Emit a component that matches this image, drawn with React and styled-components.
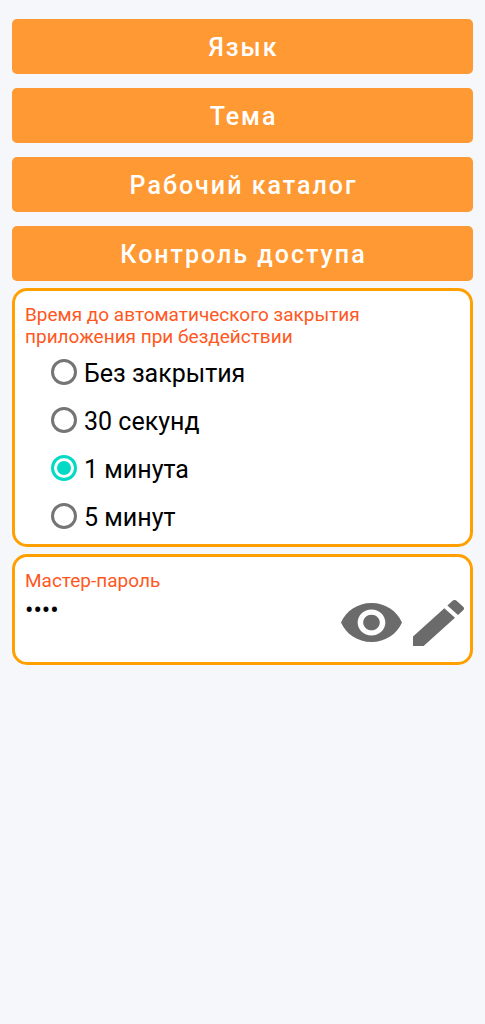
import React, { useState } from "react";
import styled, { createGlobalStyle } from "styled-components";

const GlobalStyle = createGlobalStyle`
  *, *::before, *::after { box-sizing: border-box; }
  body {
    margin: 0;
    background: #f5f7fb;
    font-family: Roboto, "Noto Sans", sans-serif;
    color: #000;
  }
`;

const Page = styled.main`
  display: flex;
  flex-direction: column;
  gap: 7px;
  padding: 19px 12px;
`;

const Menu = styled.nav`
  display: flex;
  flex-direction: column;
  gap: 14px;
`;

const MenuButton = styled.button`
  height: 55px;
  padding: 3px 0 0 2px;
  border: 0;
  border-radius: 5px;
  background: #ff9933;
  color: #fff;
  font: 500 25px/30px Roboto, "Noto Sans", sans-serif;
  letter-spacing: 2px;
  cursor: pointer;
`;

const Card = styled.section`
  border: 3px solid #ffa000;
  border-radius: 15px;
  background: #fff;
  padding: 13px 6px 4px 10px;
`;

const RadioCard = styled(Card).attrs({ as: "fieldset" })`
  margin: 0;
  min-width: 0;
`;

const caption = `
  color: #ff5722;
  font-size: 19px;
  line-height: 22px;
`;

const Legend = styled.legend`
  ${caption}
  float: left;
  width: 100%;
  max-width: 350px;
  padding: 0;
`;

const Options = styled.div`
  clear: both;
  padding-left: 26px;
`;

const Option = styled.label`
  display: flex;
  align-items: center;
  gap: 7px;
  height: 48px;
  font-size: 25px;
  line-height: 30px;
  cursor: pointer;
`;

const OptionText = styled.span`
  padding-top: 4px;
`;

const Radio = styled.input`
  appearance: none;
  display: grid;
  place-items: center;
  width: 26px;
  height: 26px;
  margin: 0;
  border: 3px solid #757575;
  border-radius: 50%;

  &:checked { border-color: #03dac5; }
  &:checked::before {
    content: "";
    width: 14px;
    height: 14px;
    border-radius: 50%;
    background: #03dac5;
  }
`;

const Caption = styled.label`
  ${caption}
  display: block;
`;

const PasswordRow = styled.div`
  display: flex;
  align-items: flex-start;
  gap: 11px;
  padding-bottom: 6px;
`;

const PasswordInput = styled.input`
  flex: 1;
  min-width: 0;
  height: 60px;
  padding: 0 0 24px;
  border: 0;
  outline: 0;
  background: transparent;
  color: #000;
  font: 25px/30px Roboto, "Noto Sans", sans-serif;
`;

const IconButton = styled.button`
  display: flex;
  padding: 0;
  border: 0;
  margin-top: ${({ $top }) => $top}px;
  background: none;
  color: #6b6b6b;
  cursor: pointer;
`;

const EyeIcon = () => (
  <svg width="61" height="39" viewBox="1 4.5 22 15" preserveAspectRatio="none" fill="currentColor" aria-hidden="true">
    <path d="M12 4.5C7 4.5 2.73 7.61 1 12c1.73 4.39 6 7.5 11 7.5s9.27-3.11 11-7.5c-1.73-4.39-6-7.5-11-7.5zM12 17c-2.76 0-5-2.24-5-5s2.24-5 5-5 5 2.24 5 5-2.24 5-5 5zm0-8c-1.66 0-3 1.34-3 3s1.34 3 3 3 3-1.34 3-3-1.34-3-3-3z" />
  </svg>
);

const PencilIcon = () => (
  <svg width="51" height="46" viewBox="3 3 18 18" preserveAspectRatio="none" fill="currentColor" aria-hidden="true">
    <path d="M3 17.25V21h3.75L17.81 9.94l-3.75-3.75L3 17.25zM20.71 7.04c.39-.39.39-1.02 0-1.41l-2.34-2.34c-.39-.39-1.02-.39-1.41 0l-1.83 1.83 3.75 3.75 1.83-1.83z" />
  </svg>
);

const sections = ["Язык", "Тема", "Рабочий каталог", "Контроль доступа"];
const timeouts = ["Без закрытия", "30 секунд", "1 минута", "5 минут"];

export default function App() {
  const [timeout, setTimeoutOption] = useState("1 минута");
  const [visible, setVisible] = useState(false);

  return (
    <>
      <GlobalStyle />
      <Page>
        <Menu>
          {sections.map((name) => (
            <MenuButton key={name} type="button">{name}</MenuButton>
          ))}
        </Menu>
        <RadioCard>
          <Legend>Время до автоматического закрытия приложения при бездействии</Legend>
          <Options>
            {timeouts.map((name) => (
              <Option key={name}>
                <Radio
                  type="radio"
                  name="timeout"
                  value={name}
                  checked={timeout === name}
                  onChange={() => setTimeoutOption(name)}
                />
                <OptionText>{name}</OptionText>
              </Option>
            ))}
          </Options>
        </RadioCard>
        <Card>
          <Caption htmlFor="master">Мастер-пароль</Caption>
          <PasswordRow>
            <PasswordInput id="master" type={visible ? "text" : "password"} defaultValue="1234" />
            <IconButton type="button" $top={11} aria-label="Показать пароль" onClick={() => setVisible(!visible)}>
              <EyeIcon />
            </IconButton>
            <IconButton type="button" $top={8} aria-label="Изменить пароль">
              <PencilIcon />
            </IconButton>
          </PasswordRow>
        </Card>
      </Page>
    </>
  );
}
